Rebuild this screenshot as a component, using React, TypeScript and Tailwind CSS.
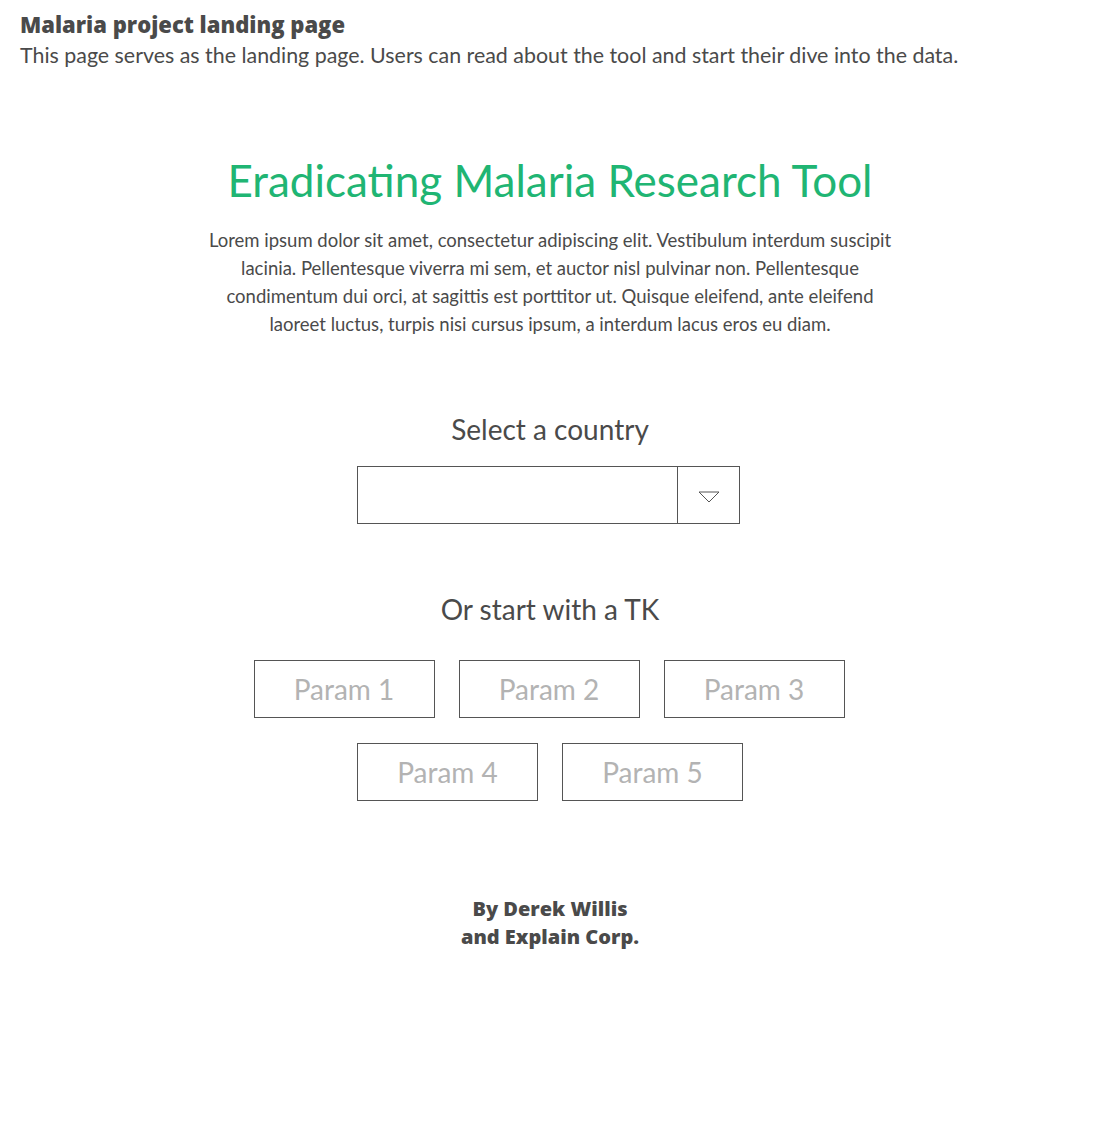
const params = ["Param 1", "Param 2", "Param 3", "Param 4", "Param 5"];

function ParamButton({ label }: { label: string }) {
  return (
    <button className="w-[181px] h-[58px] border border-[#555555] bg-white text-[28px] text-[#b3b3b3] flex items-center justify-center">
      {label}
    </button>
  );
}

export default function App() {
  return (
    <div className="w-[1100px] min-h-[1140px] bg-white text-[#4a4a4a] font-['Lato',sans-serif]">
      <header className="px-5 pt-[10px]">
        <h1 className="font-['Open_Sans',sans-serif] text-[22px] font-extrabold leading-[28px]">
          Malaria project landing page
        </h1>
        <p className="mt-[2px] text-[21.4px] leading-[30px]">
          This page serves as the landing page. Users can read about the tool and start their dive into the data.
        </p>
      </header>

      <main className="flex flex-col items-center">
        <h2 className="mt-[80px] text-[44px] leading-[60px] text-[#20b573]">Eradicating Malaria Research Tool</h2>
        <p className="mt-[16px] text-center text-[18.5px] leading-[28px]">
          Lorem ipsum dolor sit amet, consectetur adipiscing elit. Vestibulum interdum suscipit
          <br />
          lacinia. Pellentesque viverra mi sem, et auctor nisl pulvinar non. Pellentesque
          <br />
          condimentum dui orci, at sagittis est porttitor ut. Quisque eleifend, ante eleifend
          <br />
          laoreet luctus, turpis nisi cursus ipsum, a interdum lacus eros eu diam.
        </p>

        <h3 className="mt-[71px] text-[28px] leading-[40px]">Select a country</h3>
        <div className="mt-[17px] -ml-[3px] w-[383px] h-[58px] border border-[#555555] flex">
          <div className="flex-1" />
          <div className="w-[62px] border-l border-[#555555] flex items-center justify-center pt-[4px]">
            <svg width="22" height="12" viewBox="0 0 22 12" fill="none">
              <path d="M1 1 L11 11 L21 1 Z" stroke="#555555" strokeWidth="1" strokeLinejoin="miter" />
            </svg>
          </div>
        </div>

        <h3 className="mt-[65px] text-[28px] leading-[40px]">Or start with a TK</h3>
        <div className="mt-[31px] flex flex-col items-center gap-[25px]">
          <div className="flex gap-[24px] -ml-[2px]">
            {params.slice(0, 3).map((p) => (
              <ParamButton key={p} label={p} />
            ))}
          </div>
          <div className="flex gap-[24px]">
            {params.slice(3).map((p) => (
              <ParamButton key={p} label={p} />
            ))}
          </div>
        </div>

        <div className="mt-[94px] text-center font-['Open_Sans',sans-serif] text-[20px] font-extrabold leading-[28px]">
          <p>By Derek Willis</p>
          <p>and Explain Corp.</p>
        </div>
      </main>
    </div>
  );
}
